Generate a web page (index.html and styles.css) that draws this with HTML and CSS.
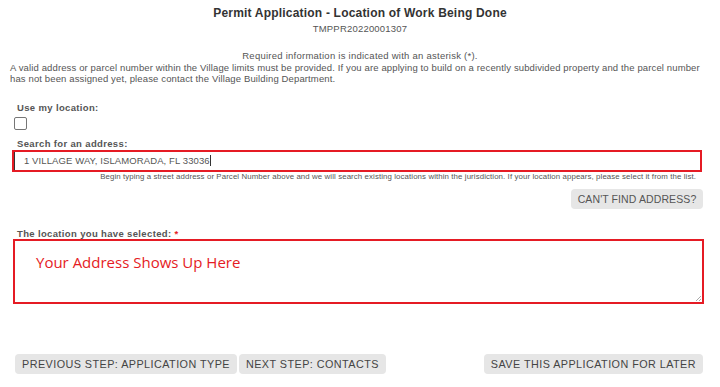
FILE: index.html
```html
<!DOCTYPE html>
<html>
<head>
<meta charset="utf-8">
<link rel="stylesheet" href="styles.css">
</head>
<body>
<div class="page">
  <h1 class="title">Permit Application - Location of Work Being Done</h1>
  <div class="code">TMPPR20220001307</div>
  <div class="required">Required information is indicated with an asterisk (*).</div>
  <p class="intro">A valid address or parcel number within the Village limits must be provided. If you are applying to build on a recently subdivided property and the parcel number has not been assigned yet, please contact the Village Building Department.</p>

  <div class="field loc-field">
    <label class="label">Use my location:</label>
    <span class="checkbox"></span>
  </div>

  <div class="field search-field">
    <label class="label">Search for an address:</label>
    <div class="search-input">1 VILLAGE WAY, ISLAMORADA, FL 33036<span class="caret"></span></div>
    <div class="help">Begin typing a street address or Parcel Number above and we will search existing locations within the jurisdiction. If your location appears, please select it from the list.</div>
    <div class="cant-row"><button class="btn btn-small">CAN'T FIND ADDRESS?</button></div>
  </div>

  <div class="field selected-field">
    <label class="label">The location you have selected: <span class="req">*</span></label>
    <div class="selected-box">Your Address Shows Up Here<span class="grip"></span></div>
  </div>

  <div class="actions">
    <div class="left-actions">
      <button class="btn">PREVIOUS STEP: APPLICATION TYPE</button>
      <button class="btn">NEXT STEP: CONTACTS</button>
    </div>
    <button class="btn">SAVE THIS APPLICATION FOR LATER</button>
  </div>
</div>
</body>
</html>
```

FILE: styles.css
```css
* { box-sizing: border-box; }
html, body { margin: 0; padding: 0; background: #fff; }
body {
  font-family: "Liberation Sans", Arial, sans-serif;
  color: #555;
  width: 720px;
  height: 387px;
  overflow: hidden;
}
.page {
  padding: 6px 10px 0 10px;
}
.title {
  margin: 0;
  font-size: 12px;
  font-weight: bold;
  color: #333;
  text-align: center;
  line-height: 14px;
  letter-spacing: 0.2px;
}
.code {
  margin-top: 3px;
  text-align: center;
  font-size: 9.5px;
  line-height: 12px;
  color: #555;
  letter-spacing: 0.2px;
}
.required {
  margin-top: 15px;
  text-align: center;
  font-size: 9.5px;
  line-height: 11px;
  letter-spacing: 0.25px;
}
.intro {
  margin: 2px 0 0 0;
  font-size: 9.5px;
  line-height: 10.5px;
  letter-spacing: 0.13px;
}
.field { padding-left: 7px; }
.label {
  display: block;
  font-size: 9.5px;
  font-weight: bold;
  color: #555;
  letter-spacing: 0.35px;
  line-height: 11px;
}
.loc-field { margin-top: 18px; }
.checkbox {
  display: block;
  margin: 4px 0 0 -3px;
  width: 13px;
  height: 13px;
  border: 1px solid #767676;
  border-radius: 2px;
  background: #fff;
}
.search-field { margin-top: 8px; }
.search-input {
  margin: 1px 0 0 -5px;
  width: 690px;
  height: 22px;
  border: 2.5px solid #e51b24;
  box-shadow: inset 1px 0 0 #333;
  padding: 0 0 0 10px;
  font-size: 9.5px;
  line-height: 17px;
  color: #555;
  letter-spacing: 0.1px;
}
.caret {
  display: inline-block;
  width: 1px;
  height: 11px;
  background: #333;
  vertical-align: -2px;
}
.help {
  margin-top: 0;
  width: 679px;
  text-align: right;
  font-size: 7.85px;
  line-height: 9px;
  color: #555;
  letter-spacing: 0.1px;
}
.cant-row {
  display: flex;
  justify-content: flex-end;
  width: 686px;
  margin-top: 8px;
}
.btn {
  border: none;
  background: #e6e6e6;
  border-radius: 4px;
  font-family: "Liberation Sans", Arial, sans-serif;
  font-size: 10.8px;
  color: #444;
  letter-spacing: 0.45px;
  height: 20px;
  padding: 0 7px;
  line-height: 20px;
  cursor: pointer;
}
.btn-small {
  width: 132px;
  padding: 0;
  font-size: 10.5px;
  letter-spacing: 0.1px;
  color: #555;
}
.selected-field { margin-top: 19px; }
.req { color: #e51b24; }
.selected-box {
  position: relative;
  margin: 0 0 0 -4px;
  width: 691px;
  height: 65px;
  border: 2px solid #e51b24;
  padding: 10px 0 0 21px;
  font-family: "Open Sans", "Noto Sans", sans-serif;
  font-size: 15px;
  line-height: 22px;
  color: #e51b24;
}
.grip {
  position: absolute;
  right: 1px;
  bottom: 1px;
  width: 5px;
  height: 5px;
  background: linear-gradient(135deg, transparent 45%, #aaa 46%, #aaa 56%, transparent 57%, transparent 75%, #aaa 76%, #aaa 86%, transparent 87%);
}
.actions {
  margin-top: 50px;
  padding-left: 5px;
  width: 693px;
  display: flex;
  justify-content: space-between;
}
.left-actions { display: flex; gap: 2px; }
```
